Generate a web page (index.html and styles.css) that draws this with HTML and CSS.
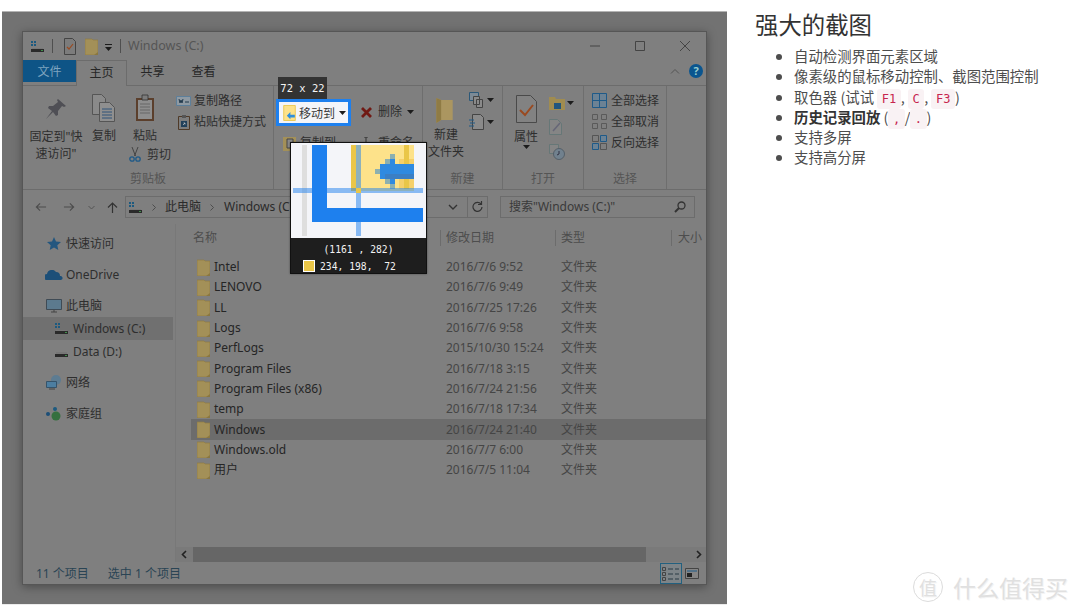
FILE: index.html
```html
<!DOCTYPE html>
<html lang="zh-CN">
<head>
    <meta charset="UTF-8">
    <title>强大的截图</title>
    <link rel="stylesheet" href="styles.css">
</head>
<body>
    <svg class="defs" width="0" height="0">
        <symbol id="folder" viewBox="0 0 13 17">
            <path d="M0 1h7l1 1h5v15H0z" fill="#a39058"/>
            <path d="M0 1h7l1 1h5v15H0z" fill="none" stroke="#8f7b44" stroke-width=".7"/>
            <path d="M9 17l4-3v3z" fill="#8a7740"/>
        </symbol>
        <symbol id="drive" viewBox="0 0 15 13">
            <path d="M1 1h2v2H1zM4 1h2v2H4zM1 4h2v2H1zM4 4h2v2H4z" fill="#1c5a80"/>
            <path d="M1 9h13v3H1z" fill="#2a2a2a"/>
            <path d="M2 8h11v1H2z" fill="#777"/>
            <path d="M11 10h2v1h-2z" fill="#3f8f4a"/>
        </symbol>
        <symbol id="caret" viewBox="0 0 7 4">
            <path d="M0 0h7L3.500 4z" fill="#1c1c1c"/>
        </symbol>
    </svg>

    <div class="page">
        <!-- Screenshot with the capture overlay -->
        <div class="shot">
            <div class="window">
                <div class="titlebar">
                    <svg class="ico-drive" width="15" height="13"><use href="#drive"/></svg>
                    <span class="tb-sep"></span>
                    <svg class="ico-doc" width="12" height="17" viewBox="0 0 12 17">
                        <path d="M.5.500h8l3 3v13H.5z" fill="#7c7c7c" stroke="#444"/>
                        <path d="M3 9l2 2 4-5" fill="none" stroke="#9a4a20" stroke-width="1.200"/>
                    </svg>
                    <svg class="ico-folder" width="13" height="17"><use href="#folder"/></svg>
                    <svg class="ico-qat" width="7" height="7" viewBox="0 0 7 7">
                        <path d="M0 0h7v1H0zM0 3h7L3.500 7z" fill="#1c1c1c"/>
                    </svg>
                    <span class="tb-sep"></span>
                    <span class="title">Windows (C:)</span>
                    <div class="controls">
                        <svg width="12" height="10" viewBox="0 0 12 10"><path d="M1 5h10" stroke="#444"/></svg>
                        <svg width="12" height="10" viewBox="0 0 12 10"><path d="M1.500.500h9v9h-9z" fill="none" stroke="#444"/></svg>
                        <svg width="12" height="10" viewBox="0 0 12 10"><path d="M1 0l10 10M11 0L1 10" stroke="#444"/></svg>
                    </div>
                </div>

                <div class="tabs">
                    <span class="tab tab-file">文件</span>
                    <span class="tab tab-active">主页</span>
                    <span class="tab">共享</span>
                    <span class="tab">查看</span>
                    <div class="tabs-right">
                        <svg width="10" height="6" viewBox="0 0 10 6"><path d="M1 5.500l4-4 4 4" fill="none" stroke="#555"/></svg>
                        <span class="help">?</span>
                    </div>
                </div>

                <div class="ribbon">
                    <div class="group g-clip">
                        <div class="group-body">
                            <div class="big big-pin">
                                <svg width="22" height="22" viewBox="0 0 22 22">
                                    <path d="M13 1l8 7-2 1-2-1-4 5 0 4-2 1-3-4-7 7 6-8-4-3 1-2 4 0 5-4-1-2z" fill="#4f4f55"/>
                                </svg>
                                <span>固定到"快<br>速访问"</span>
                            </div>
                            <div class="big big-copy">
                                <svg width="24" height="28" viewBox="0 0 24 28">
                                    <path d="M.5.500h9l4 4v16H.5z" fill="#8a8a8a" stroke="#555"/>
                                    <path d="M7.500 8.500h10l5 5v14h-15z" fill="#8f8f8f" stroke="#555"/>
                                    <path d="M10 15h10M10 18h10M10 21h10M10 24h10" stroke="#2f5378"/>
                                </svg>
                                <span>复制</span>
                            </div>
                            <div class="paste-col">
                                <div class="big big-paste">
                                    <svg width="20" height="28" viewBox="0 0 20 28">
                                        <path d="M1 4h18v23H1z" fill="#5b3f2c"/>
                                        <path d="M3 6h14v19H3z" fill="#8e8e8e"/>
                                        <path d="M5 10h10M5 13h10M5 16h10M5 19h10" stroke="#666"/>
                                        <path d="M7 1h6v5H7z" fill="#7c7c7c" stroke="#333" stroke-width=".8"/>
                                    </svg>
                                    <span>粘贴</span>
                                </div>
                                <div class="small small-cut">
                                    <svg width="12" height="15" viewBox="0 0 12 15">
                                        <path d="M3 0l3.500 9M9 0L5.500 9" stroke="#444"/>
                                        <circle cx="3" cy="12" r="2.200" fill="none" stroke="#1f5a88" stroke-width="1.300"/>
                                        <circle cx="9" cy="12" r="2.200" fill="none" stroke="#1f5a88" stroke-width="1.300"/>
                                    </svg>
                                    <span>剪切</span>
                                </div>
                            </div>
                            <div class="small-col">
                                <div class="small">
                                    <svg width="15" height="10" viewBox="0 0 15 10">
                                        <path d="M.5.500h14v9H.5z" fill="#8f9aa3" stroke="#5d7f9a"/>
                                        <path d="M3 3l1 4 1-3 1 3 1-4M9 6h4" fill="none" stroke="#223a4d"/>
                                    </svg>
                                    <span>复制路径</span>
                                </div>
                                <div class="small">
                                    <svg width="12" height="16" viewBox="0 0 12 16">
                                        <path d="M.5 2.500h11v13H.5z" fill="#7d7d7d" stroke="#4f3a28"/>
                                        <path d="M4 1h4v3H4z" fill="#555"/>
                                        <path d="M3 7h6v6H3z" fill="#21405a"/>
                                        <path d="M5 11l2-2M5.500 9H7v1.500" stroke="#ccc" stroke-width=".7" fill="none"/>
                                    </svg>
                                    <span>粘贴快捷方式</span>
                                </div>
                            </div>
                        </div>
                        <div class="group-label">剪贴板</div>
                    </div>

                    <div class="group g-org">
                        <div class="group-body org-grid">
                            <div class="org-item"></div>
                            <div class="small org-item org-del">
                                <svg width="13" height="13" viewBox="0 0 13 13"><path d="M2 2l9 9M11 2l-9 9" stroke="#701a14" stroke-width="2.800"/></svg>
                                <span>删除</span>
                                <svg width="7" height="4"><use href="#caret"/></svg>
                            </div>
                            <div class="small org-item">
                                <svg width="13" height="15" viewBox="0 0 13 15"><path d="M0 1h13v14H0z" fill="#a39058"/><path d="M4 3h6v9H4z" fill="#8a8a8a" stroke="#444"/></svg>
                                <span>复制到</span>
                            </div>
                            <div class="small org-item org-del">
                                <svg width="13" height="13" viewBox="0 0 13 13"><path d="M0 8h13v4H0z" fill="#8a8a8a"/><path d="M6 0v12M4 0h4M4 12h4" stroke="#333"/></svg>
                                <span>重命名</span>
                            </div>
                        </div>
                        <div class="group-label">组织</div>
                    </div>

                    <div class="group g-new">
                        <div class="group-body">
                            <div class="big big-new">
                                <svg width="19" height="26" viewBox="0 0 19 27"><path d="M1 1l5 2h12v21H6l-5 3z" fill="#ab9660"/><path d="M1 1l5 2v21l-5 3z" fill="#8f7b44"/></svg>
                                <span>新建<br>文件夹</span>
                            </div>
                            <div class="new-col">
                                <div class="caret-icon">
                                    <svg width="16" height="16" viewBox="0 0 16 16"><path d="M.5.500h9v8h-9z" fill="#7c8a96" stroke="#2c5878"/><path d="M4.500 4.500h6v8h-6zM7.500 7.500h6v8h-6z" fill="#8a8a8a" stroke="#444"/></svg>
                                    <svg width="7" height="4"><use href="#caret"/></svg>
                                </div>
                                <div class="caret-icon">
                                    <svg width="16" height="16" viewBox="0 0 16 16"><path d="M3.500.500h8l3 3v12h-11z" fill="#8a8a8a" stroke="#444"/><path d="M0 6h5M1 9h5M0 12h5" stroke="#1f5a88"/></svg>
                                    <svg width="7" height="4"><use href="#caret"/></svg>
                                </div>
                            </div>
                        </div>
                        <div class="group-label">新建</div>
                    </div>

                    <div class="group g-open">
                        <div class="group-body">
                            <div class="big big-prop">
                                <svg class="prop-doc" width="21" height="28" viewBox="0 0 21 28">
                                    <path d="M.5.500h14l6 6v21H.5z" fill="#828282" stroke="#4a4a4a"/>
                                    <path d="M4 15l5 5 8-10" fill="none" stroke="#9a4a20" stroke-width="2"/>
                                </svg>
                                <span>属性</span>
                                <svg width="7" height="4"><use href="#caret"/></svg>
                            </div>
                            <div class="open-col">
                                <div class="caret-icon">
                                    <svg width="16" height="14" viewBox="0 0 16 14"><path d="M0 1h6l1 2h9v11H0z" fill="#a08c50"/><path d="M5 7h7v6H5z" fill="#21567e"/></svg>
                                    <svg width="7" height="4"><use href="#caret"/></svg>
                                </div>
                                <svg width="14" height="16" viewBox="0 0 14 16"><path d="M.5.500h8l4 4v11H.5z" fill="#858585" stroke="#677"/><path d="M4 12l7-8" stroke="#667" stroke-width="1.500"/></svg>
                                <svg width="16" height="16" viewBox="0 0 16 16"><path d="M.5.500h9v9h-9z" fill="#858585" stroke="#677"/><circle cx="10" cy="10" r="5.500" fill="#71818e" stroke="#555f68"/><path d="M10 7v3l-2 1" fill="none" stroke="#334"/></svg>
                            </div>
                        </div>
                        <div class="group-label">打开</div>
                    </div>

                    <div class="group g-select">
                        <div class="group-body select-col">
                            <div class="small">
                                <svg width="15" height="15" viewBox="0 0 15 15"><path d="M.5.500h14v14H.5zM7.500 1v13M1 7.500h13" fill="#6c8294" stroke="#1f5a88"/></svg>
                                <span>全部选择</span>
                            </div>
                            <div class="small">
                                <svg width="15" height="15" viewBox="0 0 15 15"><path d="M.5.500h5v5h-5zM9.500.500h5v5h-5zM.5 9.500h5v5h-5zM9.500 9.500h5v5h-5z" fill="none" stroke="#5a5a5a"/></svg>
                                <span>全部取消</span>
                            </div>
                            <div class="small">
                                <svg width="15" height="15" viewBox="0 0 15 15"><path d="M.5 8.500h6v6h-6zM8.500.500h6v6h-6z" fill="#6c8294" stroke="#1f5a88"/><path d="M.5.500h6v6h-6zM8.500 8.500h6v6h-6z" fill="none" stroke="#555"/></svg>
                                <span>反向选择</span>
                            </div>
                        </div>
                        <div class="group-label">选择</div>
                    </div>
                </div>

                <div class="addressbar">
                    <svg class="nav-back" width="12" height="10" viewBox="0 0 13 10"><path d="M12 5H1.500M5.500 1l-4 4 4 4" fill="none" stroke="#4d4d4d" stroke-width="1.300"/></svg>
                    <svg class="nav-fwd" width="12" height="10" viewBox="0 0 13 10"><path d="M1 5h10.500M7.500 1l4 4-4 4" fill="none" stroke="#4d4d4d" stroke-width="1.300"/></svg>
                    <svg class="nav-down" width="7" height="5" viewBox="0 0 7 5"><path d="M.5 1l3 3 3-3" fill="none" stroke="#555"/></svg>
                    <svg class="nav-up" width="11" height="11" viewBox="0 0 11 11"><path d="M5.500 11V1M1 5.500l4.500-4.500 4.500 4.500" fill="none" stroke="#333" stroke-width="1.200"/></svg>
                    <div class="path-box">
                        <svg width="15" height="13"><use href="#drive"/></svg>
                        <svg class="crumb-sep" width="4" height="7" viewBox="0 0 4 7"><path d="M.5.500l3 3-3 3" fill="none" stroke="#4d4d4d"/></svg>
                        <span>此电脑</span>
                        <svg class="crumb-sep" width="4" height="7" viewBox="0 0 4 7"><path d="M.5.500l3 3-3 3" fill="none" stroke="#4d4d4d"/></svg>
                        <span class="crumb-last">Windows (C:)</span>
                        <svg class="path-down" width="10" height="6" viewBox="0 0 10 6"><path d="M1 1l4 4 4-4" fill="none" stroke="#333" stroke-width="1.400"/></svg>
                    </div>
                    <div class="refresh">
                        <svg width="11" height="12" viewBox="0 0 11 12"><path d="M9 3a4.500 4.500 0 1 0 1 3M9.500 0v3.500H6" fill="none" stroke="#333" stroke-width="1.200"/></svg>
                    </div>
                    <div class="search-box">
                        <span>搜索"Windows (C:)"</span>
                        <svg width="12" height="12" viewBox="0 0 12 12"><circle cx="7.500" cy="4.500" r="3.500" fill="none" stroke="#333" stroke-width="1.300"/><path d="M5 7l-4 4" stroke="#333" stroke-width="2"/></svg>
                    </div>
                </div>

                <div class="content">
                    <ul class="nav">
                        <li class="nav-item">
                            <svg width="14" height="13" viewBox="0 0 14 13"><path d="M7 0l2 4.500 5 .5-3.700 3.300 1 4.700L7 10.500 2.700 13l1-4.700L0 5l5-.5z" fill="#24577f"/></svg>
                            <span>快速访问</span>
                        </li>
                        <li class="nav-item">
                            <svg width="18" height="10" viewBox="0 0 18 10"><path d="M2 10a3 3 0 0 1 0-6 5 5 0 0 1 9-2 4 4 0 0 1 4 4 2 2 0 0 1 1 4z" fill="#1c4f78"/></svg>
                            <span>OneDrive</span>
                        </li>
                        <li class="nav-item nav-parent">
                            <svg width="16" height="14" viewBox="0 0 16 14"><path d="M.5.500h15v10H.5z" fill="#5c7a8e" stroke="#3f4b55"/><path d="M5 13h6M8 11v2" stroke="#444"/></svg>
                            <span>此电脑</span>
                        </li>
                        <li class="nav-item nav-sub nav-selected">
                            <svg width="15" height="13"><use href="#drive"/></svg>
                            <span>Windows (C:)</span>
                        </li>
                        <li class="nav-item nav-sub nav-sub-last">
                            <svg width="15" height="13" viewBox="0 0 15 13"><path d="M1 9h13v3H1z" fill="#2a2a2a"/><path d="M2 7h11v2H2z" fill="#777"/><path d="M11 10h2v1h-2z" fill="#3f8f4a"/></svg>
                            <span>Data (D:)</span>
                        </li>
                        <li class="nav-item">
                            <svg width="16" height="15" viewBox="0 0 16 15"><circle cx="10" cy="5" r="5" fill="#5d7c92"/><path d="M.5 6.500h10v6h-10z" fill="#4c7ea1" stroke="#35536a"/><path d="M3 14h6" stroke="#444"/></svg>
                            <span>网络</span>
                        </li>
                        <li class="nav-item">
                            <svg width="16" height="14" viewBox="0 0 16 14"><circle cx="2" cy="7" r="2" fill="#1c4f78"/><circle cx="9" cy="2" r="2" fill="#1c5a80"/><circle cx="10" cy="9" r="4.500" fill="#35703f"/></svg>
                            <span>家庭组</span>
                        </li>
                    </ul>

                    <div class="list">
                        <div class="list-head">
                            <span class="col-name">名称</span>
                            <span class="col-date">修改日期</span>
                            <span class="col-type">类型</span>
                            <span class="col-size">大小</span>
                        </div>
                        <div class="rows">
                            <div class="row"><svg class="row-ico"><use href="#folder"/></svg><span class="col-name">Intel</span><span class="col-date">2016/7/6 9:52</span><span class="col-type">文件夹</span></div>
                            <div class="row"><svg class="row-ico"><use href="#folder"/></svg><span class="col-name">LENOVO</span><span class="col-date">2016/7/6 9:49</span><span class="col-type">文件夹</span></div>
                            <div class="row"><svg class="row-ico"><use href="#folder"/></svg><span class="col-name">LL</span><span class="col-date">2016/7/25 17:26</span><span class="col-type">文件夹</span></div>
                            <div class="row"><svg class="row-ico"><use href="#folder"/></svg><span class="col-name">Logs</span><span class="col-date">2016/7/6 9:58</span><span class="col-type">文件夹</span></div>
                            <div class="row"><svg class="row-ico"><use href="#folder"/></svg><span class="col-name">PerfLogs</span><span class="col-date">2015/10/30 15:24</span><span class="col-type">文件夹</span></div>
                            <div class="row"><svg class="row-ico"><use href="#folder"/></svg><span class="col-name">Program Files</span><span class="col-date">2016/7/18 3:15</span><span class="col-type">文件夹</span></div>
                            <div class="row"><svg class="row-ico"><use href="#folder"/></svg><span class="col-name">Program Files (x86)</span><span class="col-date">2016/7/24 21:56</span><span class="col-type">文件夹</span></div>
                            <div class="row"><svg class="row-ico"><use href="#folder"/></svg><span class="col-name">temp</span><span class="col-date">2016/7/18 17:34</span><span class="col-type">文件夹</span></div>
                            <div class="row row-selected"><svg class="row-ico"><use href="#folder"/></svg><span class="col-name">Windows</span><span class="col-date">2016/7/24 21:40</span><span class="col-type">文件夹</span></div>
                            <div class="row"><svg class="row-ico"><use href="#folder"/></svg><span class="col-name">Windows.old</span><span class="col-date">2016/7/7 6:00</span><span class="col-type">文件夹</span></div>
                            <div class="row"><svg class="row-ico"><use href="#folder"/></svg><span class="col-name">用户</span><span class="col-date">2016/7/5 11:04</span><span class="col-type">文件夹</span></div>
                        </div>
                        <div class="hscroll">
                            <svg width="17" height="15" viewBox="0 0 17 15"><path d="M10 4L6.500 7.500 10 11" fill="none" stroke="#222" stroke-width="1.600"/></svg>
                            <span class="thumb"></span>
                            <svg width="14" height="15" viewBox="0 0 14 15"><path d="M5 4l3.500 3.500L5 11" fill="none" stroke="#222" stroke-width="1.600"/></svg>
                        </div>
                    </div>
                </div>

                <div class="statusbar">
                    <span class="status-count">11 个项目</span>
                    <span class="status-sel">选中 1 个项目</span>
                    <div class="views">
                        <span class="view view-on">
                            <svg width="18" height="14" viewBox="0 0 18 14"><path d="M.5.500h3v3h-3zM.5 5.500h3v3h-3zM.5 10.500h3v3h-3z" fill="none" stroke="#444"/><path d="M6 2h5M13 2h4M6 7h5M13 7h4M6 12h5M13 12h4" stroke="#2b3a44"/></svg>
                        </span>
                        <span class="view">
                            <svg width="14" height="11" viewBox="0 0 14 11"><path d="M.5.500h13v10H.5z" fill="#858585" stroke="#444"/><path d="M2 3h10" stroke="#1f5a88"/><path d="M2 5h5v4H2z" fill="#222"/></svg>
                        </span>
                    </div>
                </div>
            </div>

            <!-- Capture overlay: size hint, selection and magnifier -->
            <div class="size-tip">72 x 22</div>
            <div class="selection">
                <svg width="13" height="16" viewBox="0 0 14 18">
                    <path d="M.5.500h13v17H.5z" fill="#fde28a" stroke="#eac648"/>
                    <path d="M13 11H8V8l-4 4 4 4v-2h5z" fill="#2f8fdc"/>
                </svg>
                <span>移动到</span>
                <svg class="sel-caret" width="7" height="4"><use href="#caret"/></svg>
            </div>
            <div class="magnifier">
                <svg class="mag-view" width="135" height="95" viewBox="0 0 135 95">
                    <rect width="135" height="95" fill="#f4f5f9"/>
                    <rect x="11" y="2" width="5" height="91" fill="#dedede"/>
                    <rect x="60" y="2" width="63" height="46" fill="#fde28a"/>
                    <rect x="60" y="2" width="5" height="46" fill="#eac648"/>
                    <rect x="108" y="16" width="15" height="30" fill="#f6d06a"/>
                    <rect x="113" y="2" width="5" height="44" fill="#eac648"/>
                    <path d="M84 26h5v-5h5v-5h5v-5h5v10h19v15H104v10h-5v-5h-5v-5h-5v-5h-5z" fill="#8cb0b0"/>
                    <path d="M89 21h10v-5h5v5h19v15H104v5h-5v-5H89z" fill="#2f8ae0"/>
                    <rect x="94" y="31" width="29" height="5" fill="#3b7fc4"/>
                    <rect x="21" y="2" width="15" height="77" fill="#1e80ee"/>
                    <rect x="21" y="65" width="111" height="14" fill="#1e80ee"/>
                    <rect x="2" y="45" width="130" height="5" fill="#1e80ee" opacity=".5"/>
                    <rect x="65" y="2" width="5" height="91" fill="#1e80ee" opacity=".5"/>
                    <rect x="65" y="45" width="5" height="5" fill="#eac648"/>
                </svg>
                <div class="mag-info">
                    <div class="mag-pos">(1161 , 282)</div>
                    <div class="mag-color">
                        <span class="swatch"></span>
                        <span>234, 198,  72</span>
                    </div>
                </div>
            </div>
        </div>

        <!-- Article text -->
        <div class="article">
            <h2>强大的截图</h2>
            <ul class="features">
                <li>自动检测界面元素区域</li>
                <li>像素级的鼠标移动控制、截图范围控制</li>
                <li>取色器 (试试 <code>F1</code>, <code>C</code>, <code>F3</code>)</li>
                <li><strong>历史记录回放</strong> (<code>,</code>/<code>.</code>)</li>
                <li>支持多屏</li>
                <li>支持高分屏</li>
            </ul>
        </div>
    </div>

    <div class="watermark">
        <span class="wm-logo">值</span>
        <span class="wm-text">什么值得买</span>
    </div>
</body>
</html>
```

FILE: styles.css
```css
* {
    box-sizing: border-box;
}

html, body {
    margin: 0;
    height: 612px;
    overflow: hidden;
    background-color: #fff;
}

body {
    font-family: "Noto Sans", "Noto Sans CJK SC", sans-serif;
    position: relative;
}

.defs {
    position: absolute;
}

svg {
    display: block;
    flex: none;
}

ul {
    margin: 0;
    padding: 0;
    list-style: none;
}

.page {
    display: flex;
    padding: 12px 0 0 2px;
}

/* Screenshot */
.shot {
    position: relative;
    width: 725px;
    height: 592px;
    padding: 19px 20px;
    background-color: #727272;
    box-shadow: 0 1px 0 #ececec, 0 -1px 0 #b4b4b4;
    flex: none;
}

.window {
    width: 685px;
    height: 554px;
    display: flex;
    flex-direction: column;
    background-color: #7f7f7f;
    border: 1px solid #565656;
    box-shadow: 0 2px 9px rgba(0, 0, 0, 0.35);
    font-size: 12px;
    line-height: 16px;
    color: #2e2e2e;
}

.titlebar {
    height: 28px;
    display: flex;
    align-items: center;
    padding-left: 7px;
    flex: none;
}

.tb-sep {
    width: 1px;
    height: 14px;
    margin: 0 7px;
    background-color: #4f4f4f;
}

.ico-doc {
    margin-left: 4px;
}

.ico-folder {
    margin-left: 9px;
}

.ico-qat {
    margin: 2px 1px 0 7px;
}

.title {
    color: #555;
    font-size: 12.500px;
}

.controls {
    margin-left: auto;
    display: flex;
    gap: 33px;
    padding-right: 15px;
}

.tabs {
    height: 25px;
    display: flex;
    align-items: flex-start;
    flex: none;
    position: relative;
}

.tab {
    width: 51px;
    height: 22px;
    line-height: 23px;
    text-align: center;
    color: #262626;
}

.tab-file {
    width: 53px;
    background-color: #0e5486;
    color: #7fa4bf;
}

.tab-active {
    height: 26px;
    border: 1px solid #6c6c6c;
    border-bottom: none;
    background-color: #7f7f7f;
    position: relative;
    z-index: 1;
}

.tabs-right {
    margin-left: auto;
    height: 22px;
    display: flex;
    align-items: center;
    gap: 9px;
    padding-right: 3px;
}

.help {
    width: 14px;
    height: 14px;
    border-radius: 50%;
    background-color: #0a558f;
    color: #9cc;
    font-size: 11px;
    font-weight: bold;
    line-height: 14px;
    text-align: center;
}

.ribbon {
    height: 105px;
    display: flex;
    flex: none;
    border-top: 1px solid #6c6c6c;
    border-bottom: 1px solid #6c6c6c;
}

.group {
    height: 100%;
    display: flex;
    flex-direction: column;
    padding-bottom: 2px;
    border-right: 1px solid #6e6e6e;
}

.group-body {
    flex: 1;
    display: flex;
    padding-top: 8px;
}

.group-label {
    text-align: center;
    color: #555;
}

.g-clip { width: 251px; }
.g-org { width: 149px; }
.g-new { width: 80px; }
.g-open { width: 81px; }
.g-select { width: 83px; }

.big {
    display: flex;
    flex-direction: column;
    align-items: center;
    text-align: center;
}

.big span {
    line-height: 17px;
}

.big-pin {
    width: 66px;
    margin-top: 4px;
}

.big-pin span {
    margin-top: 8px;
}

.big-copy {
    width: 30px;
}

.big-copy span, .big-paste span {
    margin-top: 5px;
}

.paste-col {
    width: 52px;
    margin-left: 10px;
}

.big-paste {
    width: 32px;
}

.small {
    display: flex;
    align-items: center;
    gap: 4px;
    height: 21px;
    white-space: nowrap;
}

.small-cut {
    gap: 6px;
}

.small-col {
    margin: -4px 0 0 -5px;
}

.small-col .small {
    display: grid;
    grid-template-columns: 15px auto;
    gap: 3px;
}

.small-col .small svg {
    justify-self: center;
}

.org-grid {
    display: grid;
    grid-template-columns: 77px 1fr;
    grid-auto-rows: 31px;
    padding: 16px 0 0 9px;
}

.org-item {
    height: 20px;
}

.org-del {
    gap: 5px;
}

.big-new {
    width: 46px;
}

.big-new svg {
    margin: 3px 4px 0 0;
}

.big-new span {
    margin-top: 3px;
}

.new-col {
    display: flex;
    flex-direction: column;
    gap: 6px;
    margin-top: -2px;
}

.caret-icon {
    display: flex;
    align-items: center;
    gap: 2px;
}

.big-prop {
    width: 46px;
}

.prop-doc {
    margin-top: 1px;
}

.big-prop span {
    margin-top: 5px;
}

.open-col {
    display: flex;
    flex-direction: column;
    gap: 9px;
    padding-top: 2px;
}

.select-col {
    flex-direction: column;
    padding: 0 0 0 8px;
}

.select-col .small:first-child {
    margin-top: 4px;
}

.addressbar {
    height: 34px;
    display: flex;
    align-items: center;
    flex: none;
    color: #2a2a2a;
}

.nav-back {
    margin-left: 12px;
}

.nav-fwd {
    margin-left: 16px;
}

.nav-down {
    margin-left: 13px;
}

.nav-up {
    margin-left: 12px;
}

.path-box {
    width: 343px;
    height: 22px;
    margin-left: 7px;
    padding: 0 2px;
    display: flex;
    align-items: center;
    border: 1px solid #6c6c6c;
    white-space: nowrap;
}

.crumb-sep {
    margin: 0 9px;
}

.crumb-last {
    margin-left: 1px;
}

.path-down {
    margin-left: auto;
    margin-right: 7px;
}

.refresh {
    width: 20px;
    height: 22px;
    display: flex;
    align-items: center;
    justify-content: center;
    border: 1px solid #6c6c6c;
    border-left: none;
}

.search-box {
    width: 195px;
    height: 22px;
    margin-left: 12px;
    padding: 0 8px;
    display: flex;
    align-items: center;
    justify-content: space-between;
    border: 1px solid #6c6c6c;
    color: #3a3a3a;
}

.content {
    flex: 1;
    display: flex;
    min-height: 0;
}

.nav {
    width: 153px;
    padding-top: 8px;
    border-right: 1px solid #787878;
    flex: none;
}

.nav-item {
    height: 23px;
    display: grid;
    grid-template-columns: 18px auto;
    justify-content: start;
    align-items: center;
    column-gap: 3px;
    padding-left: 22px;
    margin-bottom: 8px;
}

.nav-item svg {
    justify-self: center;
}

.nav-parent {
    margin-bottom: 0;
}

.nav-sub {
    grid-template-columns: 15px auto;
    column-gap: 4px;
    padding-left: 31px;
    margin-bottom: 0;
}

.nav-sub-last {
    margin-bottom: 8px;
}

.nav-selected {
    background-color: #707070;
    margin-right: 2px;
}

.list {
    flex: 1;
    min-width: 0;
    display: flex;
    flex-direction: column;
}

.list-head {
    height: 28px;
    margin-left: 15px;
    display: flex;
    align-items: center;
    color: #4d4d4d;
    white-space: nowrap;
    flex: none;
}

.list-head .col-name {
    margin-left: 2px;
    width: 248px;
    border-right: 1px solid #6c6c6c;
}

.list-head .col-date {
    width: 115px;
    padding-left: 5px;
    border-right: 1px solid #6c6c6c;
}

.list-head .col-type {
    width: 116px;
    padding-left: 5px;
    border-right: 1px solid #6c6c6c;
}

.list-head .col-size {
    padding-left: 6px;
}

.rows {
    flex: 1;
    padding-top: 5px;
    margin-left: 15px;
}

.row {
    height: 20.300px;
    display: flex;
    align-items: center;
    padding-left: 6px;
}

.row-selected {
    background-color: #6c6c6c;
}

.row-ico {
    width: 13px;
    height: 17px;
}

.row .col-name {
    width: 236px;
    padding-left: 4px;
    color: #252525;
}

.row .col-date {
    width: 115px;
    color: #454545;
}

.row .col-type {
    color: #454545;
}

.hscroll {
    height: 15px;
    display: flex;
    flex: none;
    background-color: #7a7a7a;
}

.thumb {
    flex: 1;
    margin-right: 46px;
    background-color: #666;
}

.statusbar {
    height: 22px;
    padding: 1px 0 0 13px;
    display: flex;
    align-items: center;
    flex: none;
    color: #2a4454;
}

.status-sel {
    margin-left: 19px;
}

.views {
    margin-left: auto;
    display: flex;
    align-items: center;
    gap: 3px;
    padding-right: 7px;
}

.view {
    display: flex;
    align-items: center;
    justify-content: center;
}

.view-on {
    width: 22px;
    height: 21px;
    border: 1px solid #22607f;
    background-color: #7d8488;
}

/* Capture overlay */
.size-tip {
    position: absolute;
    left: 276px;
    top: 65px;
    width: 49px;
    height: 22px;
    background-color: #333;
    color: #f4f4f4;
    font-family: "DejaVu Sans Mono", monospace;
    font-size: 10.500px;
    line-height: 22px;
    text-align: center;
}

.selection {
    position: absolute;
    left: 274px;
    top: 87px;
    width: 75px;
    height: 27px;
    padding-left: 4px;
    display: flex;
    align-items: center;
    gap: 3px;
    background-color: #f4f5f9;
    border: 3px solid #1e80ee;
    color: #3a3a3a;
    font-size: 12px;
    white-space: nowrap;
}

.sel-caret {
    margin-left: 1px;
}

.magnifier {
    position: absolute;
    left: 288px;
    top: 130px;
    width: 137px;
    height: 132px;
    border: 1px solid #111;
    background-color: #1e1e1e;
    font-family: "DejaVu Sans Mono", monospace;
    font-size: 9.700px;
    color: #f2f2f2;
    box-shadow: 0 0 2px rgba(0, 0, 0, 0.4);
}

.mag-info {
    display: flex;
    flex-direction: column;
}

.mag-pos {
    height: 22px;
    padding-top: 2px;
    line-height: 20px;
    text-align: center;
}

.mag-color {
    display: flex;
    align-items: center;
    gap: 5px;
    padding-left: 12px;
    white-space: pre;
}

.swatch {
    width: 12px;
    height: 12px;
    background-color: #eac648;
    border: 1px solid #fff;
}

/* Article */
.article {
    padding-left: 28px;
    color: #4d4d4d;
    font-family: "Noto Sans CJK SC", "Noto Sans", sans-serif;
}

h2 {
    margin: 0;
    height: 35px;
    font-size: 23.400px;
    font-weight: normal;
    line-height: 24px;
    color: #333;
}

.features {
    margin-top: -1px;
    padding-left: 39px;
    list-style: disc;
    font-size: 14.400px;
    line-height: 20.300px;
}

.features strong {
    color: #333;
}

code {
    font-family: "DejaVu Sans Mono", monospace;
    font-size: 12px;
    line-height: 1;
    padding: 3px 4.500px;
    border-radius: 3px;
    background-color: #f9f2f4;
    color: #c7254e;
}

/* Watermark */
.watermark {
    position: absolute;
    left: 913px;
    top: 572px;
    display: flex;
    align-items: center;
    gap: 10px;
    color: #e0e0e0;
    font-family: "Noto Sans CJK SC", sans-serif;
    text-shadow: 1px 1px 0 #f4f4f4;
}

.wm-logo {
    width: 30px;
    height: 30px;
    border: 1px solid #dcdcdc;
    border-radius: 50%;
    font-size: 18px;
    line-height: 28px;
    text-align: center;
}

.wm-text {
    font-size: 23px;
    line-height: 30px;
}
```
